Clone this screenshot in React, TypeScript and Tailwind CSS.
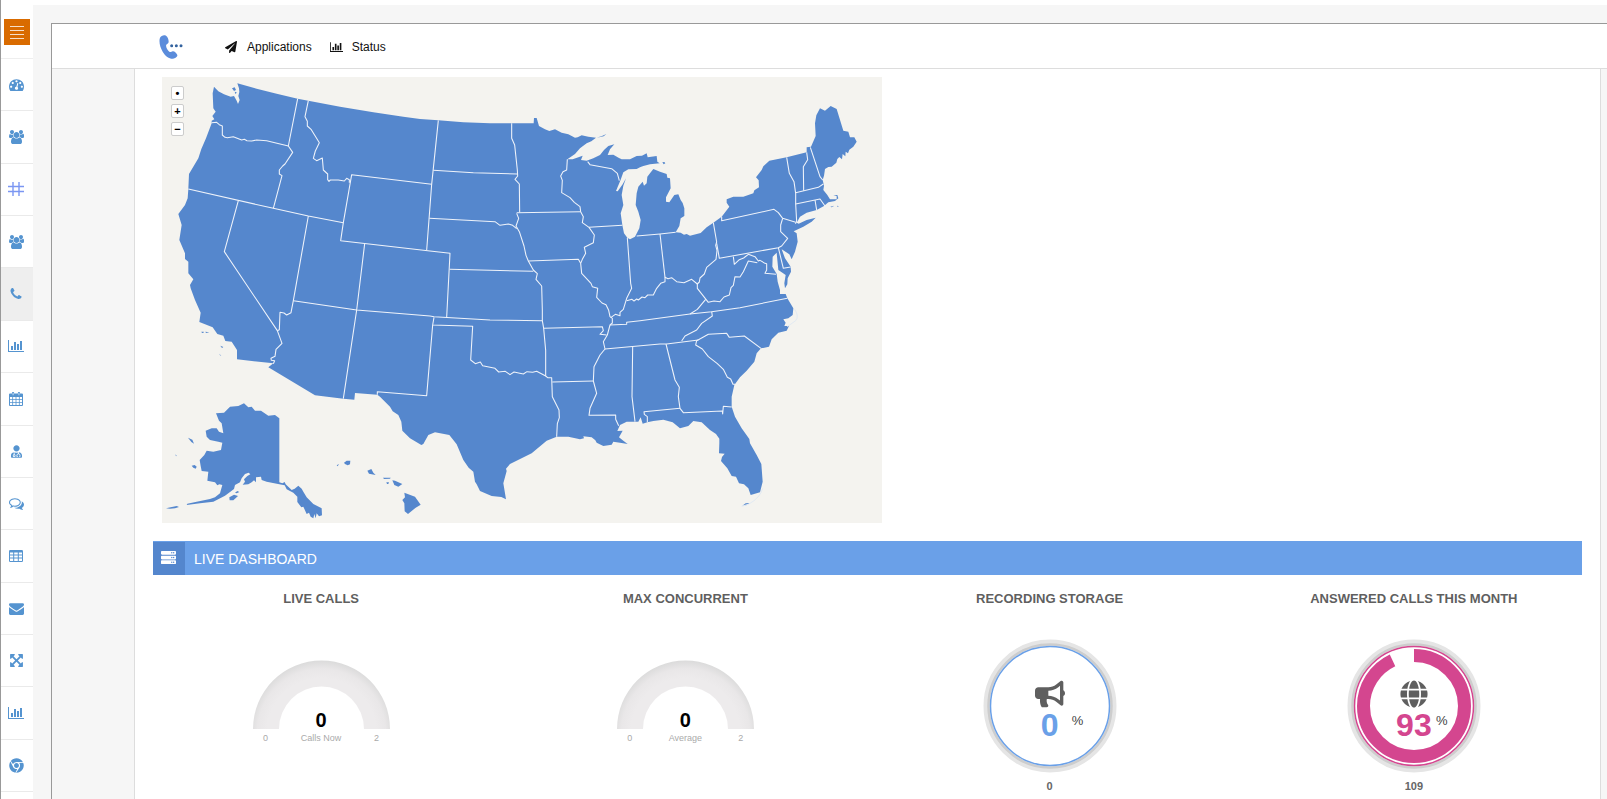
import type { ReactNode } from 'react'
import { FaBullhorn, FaChrome, FaGlobe, FaPaperPlane, FaServer, FaUserMd } from 'react-icons/fa'

type IconProps = { className?: string }

const glyph = (d: string, viewBox = '0 0 1792 1792') =>
  function Glyph({ className }: IconProps) {
    return (
      <svg viewBox={viewBox} className={className} fill="currentColor" aria-hidden="true">
        <path d={d} />
      </svg>
    )
  }

const Tachometer = glyph(
  'M384 1152q0-53-37.5-90.5t-90.5-37.5-90.5 37.5-37.5 90.5 37.5 90.5 90.5 37.5 90.5-37.5 37.5-90.5zm192-448q0-53-37.5-90.5t-90.5-37.5-90.5 37.5-37.5 90.5 37.5 90.5 90.5 37.5 90.5-37.5 37.5-90.5zm428 481l101-382q6-26-7.5-48.5t-38.5-29.5-48 6.5-30 39.5l-101 382q-60 5-107 43.5t-63 98.5q-20 77 20 146t117 89 146-20 89-117q16-60-6-117t-72-91zm660-33q0-53-37.5-90.5t-90.5-37.5-90.5 37.5-37.5 90.5 37.5 90.5 90.5 37.5 90.5-37.5 37.5-90.5zm-640-640q0-53-37.5-90.5t-90.5-37.5-90.5 37.5-37.5 90.5 37.5 90.5 90.5 37.5 90.5-37.5 37.5-90.5zm448 192q0-53-37.5-90.5t-90.5-37.5-90.5 37.5-37.5 90.5 37.5 90.5 90.5 37.5 90.5-37.5 37.5-90.5zm320 448q0 261-141 483-19 29-54 29h-1402q-35 0-54-29-141-221-141-483 0-182 71-348t191-286 286-191 348-71 348 71 286 191 191 286 71 348z'
)
const Users = glyph(
  'M593 896q-162 5-265 128h-134q-82 0-138-40.5t-56-118.5q0-353 124-353 6 0 43.5 21t97.5 42.5 119 21.5q67 0 133-23-5 37-5 66 0 159 92 293zm1071 637q0 120-73 189.5t-194 69.5h-874q-121 0-194-69.5t-73-189.5q0-53 3.5-103.5t14-109 26.5-108.5 43-97.5 62-81 85.5-53.5 111.5-20q10 0 43 21.5t73 48 107 48 135 21.5 135-21.5 107-48 73-48 43-21.5q61 0 111.5 20t85.5 53.5 62 81 43 97.5 26.5 108.5 14 109 3.5 103.5zm-1024-1277q0 106-75 181t-181 75-181-75-75-181 75-181 181-75 181 75 75 181zm704 384q0 159-112.5 271.5t-271.5 112.5-271.5-112.5-112.5-271.5 112.5-271.5 271.5-112.5 271.5 112.5 112.5 271.5zm576 225q0 78-56 118.5t-138 40.5h-134q-103-123-265-128 92-134 92-293 0-29-5-66 66 23 133 23 59 0 119-21.5t97.5-42.5 43.5-21q124 0 124 353zm-128-609q0 106-75 181t-181 75-181-75-75-181 75-181 181-75 181 75 75 181z',
  '0 0 1920 1792'
)
const Phone = glyph(
  'M1600 1240q0 27-10 70.5t-21 68.5q-21 50-122 106-94 51-186 51-27 0-53-3.5t-57.5-12.5-47-14.5-55.5-20.5-49-18q-98-35-175-83-127-79-264-216t-216-264q-48-77-83-175-3-9-18-49t-20.5-55.5-14.5-47-12.5-57.5-3.5-53q0-92 51-186 56-101 106-122 25-11 68.5-21t70.5-10q14 0 21 3 18 6 53 76 11 19 30 54t35 63.5 31 53.5q3 4 17.5 25t21.5 35.5 7 28.5q0 20-28.5 50t-62 55-62 53-28.5 46q0 9 5 22.5t8.5 20.5 14 24 11.5 19q76 137 174 235t235 174q2 1 19 11.5t24 14 20.5 8.5 22.5 5q18 0 46-28.5t53-62 55-62 50-28.5q14 0 28.5 7t35.5 21.5 25 17.5q25 15 53.5 31t63.5 35 54 30q70 35 76 53 3 7 3 21z'
)
const BarChart = glyph(
  'M640 896v512h-256v-512h256zm384-512v1024h-256v-1024h256zm1024 1152v128h-2048v-1536h128v1408h1920zm-640-896v768h-256v-768h256zm384-384v1152h-256v-1152h256z',
  '0 0 2048 1792'
)
const Comments = glyph(
  'M704 384q-153 0-286 52t-211.5 141-78.5 191q0 82 53 158t149 132l97 56-35 84q34-20 62-39l44-31 53 10q78 14 153 14 153 0 286-52t211.5-141 78.5-191-78.5-191-211.5-141-286-52zm0-128q191 0 353.5 68.5t256.5 186.5 94 257-94 257-256.5 186.5-353.5 68.5q-86 0-176-16-124 88-278 128-36 9-86 16h-3q-11 0-20.5-8t-11.5-21q-1-3-1-6.5t.5-6.5 2-6l2.5-5 3.5-5.5 4-5 4.5-5 4-4.5q5-6 23-25t26-29.5 22.5-29 25-38.5 20.5-44q-124-72-195-177t-71-224q0-139 94-257t256.5-186.5 353.5-68.5zm822 1169q10 24 20.5 44t25 38.5 22.5 29 26 29.5 23 25q1 1 4 4.5t4.5 5 4 5 3.5 5.5l2.5 5 2 6 .5 6.5-1 6.5q-3 14-13 22t-22 7q-50-7-86-16-154-40-278-128-90 16-176 16-271 0-472-132 58 4 88 4 161 0 309-45t264-129q125-92 192-212t67-254q0-77-23-152 129 71 204 178t75 230q0 120-71 224.5t-195 176.5z'
)
const Envelope = glyph(
  'M1792 710v794q0 66-47 113t-113 47h-1472q-66 0-113-47t-47-113v-794q44 49 101 87 362 246 497 345 57 42 92.5 65.5t94.5 48 110 24.5h2q51 0 110-24.5t94.5-48 92.5-65.5q170-123 498-345 57-39 100-87zm0-294q0 79-49 151t-122 123q-376 261-468 325-10 7-42.5 31t-54 38.5-52 32.5-57.5 27-50 9h-2q-23 0-50-9t-57.5-27-52-32.5-54-38.5-42.5-31q-91-64-262-182.5t-205-142.5q-62-42-117-115.5t-55-136.5q0-78 41.5-130t118.5-52h1472q65 0 112.5 47t47.5 113z'
)
const Arrows = glyph(
  'M1411 541l-355 355 355 355 144-144q29-31 70-14 39 17 39 59v448q0 26-19 45t-45 19h-448q-42 0-59-40-17-39 14-69l144-144-355-355-355 355 144 144q31 30 14 69-17 40-59 40h-448q-26 0-45-19t-19-45v-448q0-42 40-59 39-17 69 14l144 144 355-355-355-355-144 144q-19 19-45 19-12 0-24-5-40-17-40-59v-448q0-26 19-45t45-19h448q42 0 59 40 17 39-14 69l-144 144 355 355 355-355-144-144q-31-30-14-69 17-40 59-40h448q26 0 45 19t19 45v448q0 42-39 59-13 5-25 5-26 0-45-19z'
)

function Hash({ className }: IconProps) {
  return (
    <svg viewBox="0 0 16 14" className={className} fill="none" stroke="#7b96f2" aria-hidden="true">
      <path strokeWidth="1.4" d="M5 0v14M11 0v14M0 4.5h16M0 9.5h16" />
    </svg>
  )
}

function Calendar({ className }: IconProps) {
  return (
    <svg viewBox="0 0 14 14" className={className} fill="currentColor" aria-hidden="true">
      <path d="M1 1.5h2V.8a.8.8 0 0 1 .8-.8h.5a.8.8 0 0 1 .8.8v.7h3.8V.8a.8.8 0 0 1 .8-.8h.5a.8.8 0 0 1 .8.8v.7h2a1 1 0 0 1 1 1V13a1 1 0 0 1-1 1H1a1 1 0 0 1-1-1V2.500a1 1 0 0 1 1-1z" />
      <path
        fill="#fff"
        d="M1 5h2.300v2.300H1zM4.100 5h2.500v2.300H4.100zM7.400 5h2.500v2.300H7.400zM10.700 5H13v2.300h-2.300zM1 8.100h2.300v2.200H1zM4.100 8.100h2.500v2.200H4.100zM7.400 8.100h2.500v2.200H7.400zM10.700 8.100H13v2.200h-2.300zM1 11.100h2.300V13H1zM4.100 11.100h2.500V13H4.100zM7.400 11.100h2.500V13H7.400zM10.700 11.100H13V13h-2.300zM3.700 1h.7v2.300h-.7zM9.600 1h.7v2.300h-.7z"
      />
    </svg>
  )
}

function TableIcon({ className }: IconProps) {
  return (
    <svg viewBox="0 0 14 12" className={className} aria-hidden="true">
      <rect width="14" height="12" rx="1.200" fill="currentColor" />
      <path
        fill="#fff"
        d="M1 2.500h3.200v2.100H1zM5.200 2.500h3.600v2.100H5.200zM9.800 2.500H13v2.100H9.800zM1 5.500h3.200v2.100H1zM5.200 5.500h3.600v2.100H5.200zM9.800 5.500H13v2.100H9.800zM1 8.600h3.200V11H1zM5.200 8.600h3.600V11H5.200zM9.800 8.600H13V11H9.800z"
      />
    </svg>
  )
}

function Logo() {
  return (
    <svg viewBox="0 0 72 72" className="size-6" aria-hidden="true">
      <path
        fill="#5b8cdb"
        d="M3 8C6 2 15-1 21 2C26 5 29 13 29 20C29 24 25 26 22 29C19 34 25 45 31 50C35 53 37 50 41 49C46 48 53 55 55 60C56 66 48 71 42 71C32 72 19 64 11 50C3 37-1 19 3 8Z"
      />
      <g fill="#33639f">
        <circle cx="38" cy="32" r="4.500" />
        <circle cx="52" cy="32" r="4.500" />
        <circle cx="66" cy="32" r="4.500" />
      </g>
    </svg>
  )
}

const sideLinks = [
  { label: 'Dashboard', icon: <Tachometer className="size-[15px]" /> },
  { label: 'Contacts', icon: <Users className="h-[14px] w-[15px]" /> },
  { label: 'Numbers', icon: <Hash className="h-[14px] w-4" /> },
  { label: 'Groups', icon: <Users className="h-[14px] w-[15px]" /> },
  { label: 'Calls', icon: <Phone className="size-[14px]" />, active: true },
  { label: 'Reports', icon: <BarChart className="h-[14px] w-4" /> },
  { label: 'Calendar', icon: <Calendar className="size-[14px]" /> },
  { label: 'Staff', icon: <FaUserMd className="h-[13px] w-[11px]" /> },
  { label: 'Chat', icon: <Comments className="size-[15px]" /> },
  { label: 'Tables', icon: <TableIcon className="h-3 w-[14px]" /> },
  { label: 'Mail', icon: <Envelope className="size-[15px]" /> },
  { label: 'Expand', icon: <Arrows className="size-[15px]" /> },
  { label: 'Statistics', icon: <BarChart className="h-[14px] w-4" /> },
  { label: 'Browser', icon: <FaChrome className="size-[15px]" /> },
]

const mainland =
  'M156,29 169,43 186,52 206,59 216,57 224,71 228,81 233,69 229,57 232,45 231,34 226,19 284,35 344,50 407,65 439,71 534,89 634,106 724,119 774,126 829,130 904,136 984,139 1049,139 1115,139 1116,123 1124,123 1131,147 1149,157 1162,162 1179,157 1199,167 1219,172 1239,182 1247,181 1259,175 1279,179 1302,182 1288,193 1274,199 1254,214 1239,231 1216,247 1232,247 1262,236 1257,249 1274,251 1294,244 1314,234 1326,219 1339,207 1357,202 1344,217 1337,234 1354,233 1371,243 1379,247 1404,247 1424,237 1440,236 1454,229 1457,241 1484,237 1486,254 1493,259 1464,262 1444,267 1434,271 1424,276 1399,277 1384,286 1376,308 1362,342 1367,343 1382,322 1392,304 1384,326 1379,354 1384,384 1376,409 1381,444 1386,469 1396,482 1404,487 1419,479 1432,454 1436,429 1429,404 1421,384 1424,349 1429,329 1442,314 1446,326 1454,319 1456,299 1464,289 1474,276 1494,284 1514,291 1516,302 1524,304 1526,334 1512,361 1512,374 1522,376 1537,354 1549,352 1556,369 1562,378 1567,394 1567,417 1556,424 1552,447 1541,466 1556,467 1566,473 1574,471 1584,476 1616,468 1634,451 1654,437 1679,419 1702,389 1694,377 1694,367 1714,359 1744,359 1774,349 1777,340 1791,331 1790,310 1782,301 1799,279 1804,268 1822,251 1874,241 1934,226 1934,211 1947,209 1961,177 1959,139 1963,115 1974,94 1989,101 2006,87 2024,96 2044,161 2059,164 2064,181 2077,181 2084,194 2074,209 2062,218 2058,229 2051,224 2050,238 2042,231 2040,247 2032,240 2026,246 2023,257 2009,269 1999,270 1989,276 1986,296 1982,309 1986,326 1984,339 1996,354 2004,367 2024,367 2024,357 2014,354 2026,354 2029,364 2019,372 1999,376 1986,387 1964,399 1934,407 1914,419 1904,437 1910,440 1934,429 1961,422 1949,434 1924,449 1895,463 1904,469 1907,494 1899,524 1889,547 1882,532 1859,517 1869,544 1886,569 1887,584 1877,604 1876,622 1869,634 1867,619 1871,594 1859,586 1849,579 1846,549 1844,527 1832,539 1831,569 1844,591 1847,614 1854,639 1854,651 1871,651 1876,664 1894,694 1892,714 1879,724 1864,727 1871,737 1867,747 1881,747 1874,761 1849,767 1829,787 1821,809 1797,814 1784,829 1777,854 1754,881 1734,901 1717,924 1709,959 1709,989 1719,1019 1739,1054 1762,1086 1764,1099 1784,1134 1798,1161 1802,1214 1794,1246 1766,1254 1759,1234 1746,1222 1731,1219 1722,1199 1709,1197 1696,1174 1677,1152 1680,1140 1688,1130 1671,1129 1672,1099 1672,1085 1662,1071 1644,1059 1619,1036 1594,1032 1579,1047 1554,1054 1532,1036 1504,1028 1474,1032 1456,1036 1442,1040 1436,1021 1429,1034 1394,1034 1374,1044 1366,1062 1382,1061 1371,1081 1384,1091 1397,1101 1374,1097 1354,1094 1349,1103 1324,1107 1304,1097 1300,1090 1289,1081 1264,1078 1266,1084 1254,1087 1219,1079 1184,1079 1154,1091 1109,1129 1044,1161 1032,1175 1034,1182 1024,1219 1032,1267 1018,1260 989,1257 954,1242 944,1222 939,1214 934,1184 920,1172 904,1149 884,1102 862,1074 819,1066 799,1074 784,1101 778,1104 744,1084 721,1061 718,1034 709,1014 692,1003 684,989 654,959 646,953 579,948 577,968 544,965 459,955 319,871 334,859 225,847 225,819 209,794 190,792 184,776 166,771 152,751 112,735 116,707 99,669 86,634 84,624 94,607 79,589 79,554 69,546 69,529 52,489 59,444 49,411 69,384 77,364 79,336 81,291 109,244 118,216 132,184 149,139 149,131 157,127 151,117 161,104 154,94 152,49Z'

// state lines, in the same units as the mainland outline
const stateLines = [
  '149,137 164,136 172,143 181,147 181,174 189,181 196,182 214,179 239,189 247,187 255,191 269,192 284,189 314,191 379,207',
  '407,65 379,207 392,226 369,261 362,267 352,279 352,291 360,296 334,394',
  '439,71 429,119 436,133 436,147 448,158 472,197 460,222 454,244 464,251 481,243 484,279 497,291 497,308 501,313 505,309 529,309 547,312 554,304 562,308 562,317',
  '79,336 334,394 439,417 544,437',
  '809,322 569,293 544,437 536,491 804,522 864,529 854,721',
  '229,371 187,524 346,761 360,799 342,817 339,838 327,844 328,850 338,851 334,860',
  '439,417 394,671 387,707 374,714 366,708 354,706 352,758 346,761',
  '394,671 584,699 804,717 816,719 984,729 1141,731',
  '608,500 584,699 544,965',
  '829,130 809,322 794,520',
  '814,280 934,287 1066,291',
  '802,424 999,434 1014,445 1039,441 1052,445 1064,455',
  '863,577 1114,583',
  '1049,139 1049,184 1058,204 1066,279 1067,297 1059,307 1072,321 1073,406',
  '1064,407 1256,404',
  '1064,409 1070,424 1062,447 1072,464 1086,507 1092,535 1099,552 1114,579 1126,590 1122,607 1139,627 1141,699 1141,731 1145,754 1151,820 1151,897 1157,902 1169,902 1171,959 1191,999 1192,1022 1186,1040 1184,1079',
  '1099,552 1249,547 1256,559',
  '1216,247 1214,279 1203,284 1196,297 1201,310 1199,347 1224,362 1237,376 1254,389 1256,404 1264,419 1261,437 1281,451 1297,474 1294,497 1267,511 1271,529 1261,547 1256,559 1259,589 1287,619 1291,629 1307,634 1304,661 1320,678 1332,683 1340,700 1344,719 1351,724 1351,738 1344,744 1336,774 1324,794 1329,816 1314,834 1296,869 1294,912 1304,949 1284,994 1281,1015 1361,1014 1361,1027 1370,1046',
  '1277,254 1284,263 1349,275 1366,289 1372,311',
  '1281,451 1381,445',
  '1396,482 1406,619 1409,634 1394,664 1384,697 1374,706 1374,716 1360,712 1346,722',
  '1394,671 1410,667 1416,672 1424,666 1429,669 1440,660 1449,662 1457,654 1474,654 1484,634 1496,619 1509,614 1509,601 1518,605 1529,602 1544,614 1566,617 1589,607 1606,621 1612,615 1614,603 1627,591 1634,571 1662,547 1665,520 1661,505 1664,495 1654,437',
  '1424,477 1494,471 1541,466',
  '1494,471 1509,601',
  '1679,419 1679,431 1836,397 1849,407 1862,424 1901,436',
  '1862,424 1856,444 1856,464 1877,484 1859,507 1849,512 1672,544 1664,499',
  '1849,512 1864,574 1886,570',
  '1714,539 1717,562 1732,548 1745,543 1759,532 1779,539 1789,552 1794,550 1809,559 1814,560 1814,579 1809,589 1842,592',
  '1786,557 1759,552 1744,584 1734,600 1719,599 1714,625 1707,632 1702,654 1686,660 1674,674 1656,672 1639,676 1606,634 1606,621',
  '1631,667 1606,697 1584,711',
  '1876,664 1734,692 1649,704 1584,711 1434,731 1394,736 1394,742 1344,744',
  '1329,816 1494,801 1514,801 1609,789',
  '1649,704 1651,717 1619,739 1604,759 1569,777 1559,792',
  '1604,791 1639,772 1694,769 1702,781 1747,777 1797,814',
  '1604,790 1601,804 1621,816 1639,839 1666,860 1684,877 1696,901 1706,906 1713,922 1719,922',
  '1512,801 1539,909 1552,931 1549,959 1554,994 1564,1007 1681,1002 1682,1011 1684,988 1709,990',
  '1554,994 1446,1004 1447,1012 1456,1019 1456,1036',
  '1412,809 1410,959 1419,1034',
  '1145,754 1321,749 1324,761 1314,772 1334,774',
  '1171,915 1294,912',
  '816,721 812,744 932,748 926,849 940,860 955,855 962,866 999,874 1010,885 1030,883 1044,893 1056,885 1084,891 1095,884 1112,886 1124,883 1151,897',
  '812,744 794,956 646,944 646,953',
  '1874,241 1882,289 1896,314 1901,349 1901,381 1904,434 1900,440',
  '1934,226 1937,248 1924,269 1925,341',
  '1945,211 1974,299 1982,309',
  '1901,347 1969,331 1984,321',
  '1901,381 1974,366 1989,387',
  '1959,369 1964,399',
]

// Alaska, Hawaii and the smaller islands
const islands = [
  '252,310 265,322 275,320 285,332 303,332 325,347 345,345 358,355 358,547 367,550 374,546 377,553 395,570 404,566 415,557 425,566 430,575 440,592 460,612 485,625 486,646 477,649 470,640 467,655 463,642 460,655 452,650 447,638 440,642 430,620 424,622 412,606 412,590 400,578 380,568 374,556 358,553 320,545 305,540 303,530 288,532 288,547 282,541 275,547 265,553 248,554 255,545 252,538 262,528 271,523 266,518 255,522 245,535 240,547 225,555 222,567 195,587 160,605 120,610 80,615 82,611 110,605 150,597 165,592 180,580 187,555 178,553 172,556 165,547 142,542 145,515 125,513 122,498 119,480 133,465 140,452 160,455 183,450 187,428 175,425 150,420 140,410 137,392 155,385 170,385 177,395 190,400 185,370 177,362 168,340 192,338 210,320 235,318',
  '208,592 222,584 234,588 220,601 209,601',
  '225,578 232,573 238,576 230,580',
  '18,625 32,622 50,618 57,621 45,625 30,626',
  '84,413 97,419 102,431 94,426',
  '95,497 104,495 110,500 107,506 100,503',
  '46,463 50,467 48,469',
  '552,488 560,482 571,482 570,493 563,496 555,492',
  '530,496 537,492 533,499',
  '622,512 634,507 640,518 647,525 627,521',
  '669,533 692,533 690,536 672,537',
  '697,541 705,542 727,552 715,560 703,555',
  '679,547 687,547 685,552 681,552',
  '733,578 765,590 782,614 766,624 744,642 734,634 733,610 727,600 735,592',
  '124,95 131,95 131,98 126,99',
  '136,95 148,97 138,99',
  '181,137 190,141 186,144',
  '178,161 184,168 180,166',
]

const zoomButtons = [
  { label: 'Reset zoom', sign: '•' },
  { label: 'Zoom in', sign: '+' },
  { label: 'Zoom out', sign: '−' },
]

function UsaMap() {
  return (
    <div className="relative w-full max-w-[720px] bg-[#f4f3ef]">
      <svg viewBox="0 0 2160 1338" className="block w-full" role="img" aria-label="Map of the United States">
        <g fill="#5587cd">
          <path d={mainland} />
          <path d="M1304,182 1325,178 1333,171 1320,177Z M210,34l8,-3 4,8 -6,3Z M218,44l6,2 -3,6Z M1501,256l6,-1 3,4 -5,3Z M2005,389l12,-3 -8,5Z M2025,386l6,2 -5,1Z" />
          <path d="M1741,1286l10,-7 12,-1 -8,6Z" />
          {islands.map((points) => (
            <polygon key={points} points={points} transform="translate(-6 669)" />
          ))}
        </g>
        <g fill="none" stroke="#eff3fa" strokeWidth="3.2" strokeLinejoin="round">
          {stateLines.map((points) => (
            <polyline key={points} points={points} />
          ))}
        </g>
        <g fill="none" stroke="#e2eaf3" strokeWidth="3">
          <path d="M1898,697 Q1912,718 1901,731 L1876,749" />
          <path d="M1802,1234 Q1795,1262 1761,1281 L1739,1288" />
        </g>
      </svg>
      <div className="absolute left-[9px] top-[9px] flex flex-col gap-1">
        {zoomButtons.map(({ label, sign }) => (
          <button
            key={label}
            type="button"
            aria-label={label}
            className="flex h-[14px] w-[13px] items-center justify-center rounded-[2px] border border-[#ccc] bg-white text-[11px] font-bold leading-none text-black"
          >
            {sign}
          </button>
        ))}
      </div>
    </div>
  )
}

function Gauge({ value, caption, max }: { value: number; caption: string; max: number }) {
  return (
    <div className="mt-[51px] w-[139px]">
      <div className="relative">
        <svg viewBox="0 0 139 69" className="block w-full" aria-hidden="true">
          <defs>
            <radialGradient id="gauge" gradientUnits="userSpaceOnUse" cx="69.500" cy="73" r="73">
              <stop offset="0.75" stopColor="#edebec" />
              <stop offset="0.88" stopColor="#e9e7e8" />
              <stop offset="1" stopColor="#dadada" />
            </radialGradient>
          </defs>
          <path fill="url(#gauge)" d="M1 69a68.500 68.500 0 0 1 137 0h-26a42.500 42.500 0 0 0-85 0z" />
        </svg>
        <div className="absolute inset-x-0 bottom-0 text-center text-xl font-bold leading-[18px] text-black">
          {value}
        </div>
      </div>
      <div className="mt-1 grid grid-cols-[28px_1fr_28px] text-center text-[9px] leading-[10px] text-[#aaa]">
        <span>0</span>
        <span>{caption}</span>
        <span>{max}</span>
      </div>
    </div>
  )
}

type DialProps = { percent: number; count: number; color: string; icon: ReactNode; textClass: string }

function Dial({ percent, count, color, icon, textClass }: DialProps) {
  return (
    <div className="mt-[30px] flex flex-col items-center">
      <div className="relative size-[134px]">
        <svg viewBox="0 0 134 134" className="block size-full" fill="none" aria-hidden="true">
          <circle cx="67" cy="67" r="64" stroke="#e5e5e5" strokeWidth="5" />
          <circle cx="67" cy="67" r="61.500" stroke="#cdcdcd" strokeWidth="2.500" />
          <circle cx="67" cy="67" r="59.500" stroke={color} strokeWidth="1.500" />
          {percent > 0 && (
            <circle
              cx="67"
              cy="67"
              r="50.500"
              stroke={color}
              strokeWidth="13"
              pathLength="100"
              strokeDasharray={`${percent} 100`}
              transform="rotate(-90 67 67)"
            />
          )}
        </svg>
        <div className="absolute inset-0 flex flex-col items-center pt-10 text-[#5f5f5f]">
          {icon}
          <div className={textClass}>{percent}</div>
        </div>
        <span className="absolute left-[89px] top-[74px] text-[13px] leading-4 text-[#444]">%</span>
      </div>
      <div className="mt-[5px] text-[11px] font-bold leading-4 text-[#666]">{count}</div>
    </div>
  )
}

function Stat({ title, children }: { title: string; children: ReactNode }) {
  return (
    <div className="flex flex-col items-center">
      <h3 className="text-center text-[13px] font-bold leading-5 text-[#5f5f5f]">{title}</h3>
      {children}
    </div>
  )
}

export default function App() {
  return (
    <div className="flex min-h-screen border-l border-[#999] bg-white font-['Liberation_Sans',Arial,sans-serif]">
      <aside className="flex w-8 shrink-0 flex-col">
        <div className="flex h-[59px] items-end border-b border-[#eee] pb-[13px] pl-[3px]">
          <button
            type="button"
            aria-label="Toggle menu"
            className="flex size-[26px] flex-col items-center justify-center gap-[3px] bg-[#d96b00]"
          >
            <span className="h-px w-[14px] bg-[#f6dfc8]" />
            <span className="h-px w-[14px] bg-[#f6dfc8]" />
            <span className="h-px w-[14px] bg-[#f6dfc8]" />
            <span className="h-px w-[14px] bg-[#f6dfc8]" />
          </button>
        </div>
        <nav className="grid h-[733px] grid-rows-[repeat(14,minmax(0,1fr))]">
          {sideLinks.map(({ label, icon, active }) => (
            <a
              key={label}
              href="#"
              aria-label={label}
              className={`flex items-center justify-center border-b border-[#eaeaea] pr-0.5 text-[#5594d0] ${
                active ? 'bg-[#eee]' : ''
              }`}
            >
              {icon}
            </a>
          ))}
        </nav>
      </aside>

      <div className="mt-[5px] flex min-w-0 flex-1 bg-[#f6f6f6] pl-[18px] pt-[18px]">
        <div className="flex min-w-0 flex-1 flex-col border-l border-t border-[#999]">
          <header className="flex h-[45px] items-center border-b border-[#ddd] bg-white pl-[107px] pt-0.5 text-xs text-[#111]">
            <a href="#" aria-label="Home">
              <Logo />
            </a>
            <a href="#" className="ml-[42px] flex items-center gap-[10px]">
              <FaPaperPlane className="size-3" />
              Applications
            </a>
            <a href="#" className="ml-[18px] flex items-center gap-[9px]">
              <BarChart className="h-3 w-[13px]" />
              Status
            </a>
          </header>

          <main className="ml-[82px] mr-[6px] flex-1 border-x border-[#ddd] bg-white">
            <div className="pl-[27px] pt-2">
              <UsaMap />
            </div>

            <section>
              <div className="mx-[18px] mt-[18px] flex h-[34px] border-t border-[#6aa0e8] bg-[#6aa0e8] text-white">
                <div className="flex w-8 justify-center bg-[#5486cd] pr-px pt-2">
                  <FaServer className="size-[15px]" />
                </div>
                <h2 className="ml-[9px] text-sm leading-[34px]">LIVE DASHBOARD</h2>
              </div>
              <div className="mx-1 mt-[14px] grid grid-cols-4 pb-1">
                <Stat title="LIVE CALLS">
                  <Gauge value={0} caption="Calls Now" max={2} />
                </Stat>
                <Stat title="MAX CONCURRENT">
                  <Gauge value={0} caption="Average" max={2} />
                </Stat>
                <Stat title="RECORDING STORAGE">
                  <Dial
                    percent={0}
                    count={0}
                    color="#6aa0e8"
                    textClass="text-[32px] font-bold leading-8 text-[#6aa0e8]"
                    icon={<FaBullhorn className="size-[30px]" />}
                  />
                </Stat>
                <Stat title="ANSWERED CALLS THIS MONTH">
                  <Dial
                    percent={93}
                    count={109}
                    color="#d4468f"
                    textClass="text-[32px] font-bold leading-8 text-[#d4468f]"
                    icon={<FaGlobe className="my-px size-7" />}
                  />
                </Stat>
              </div>
            </section>
          </main>
        </div>
      </div>
    </div>
  )
}
